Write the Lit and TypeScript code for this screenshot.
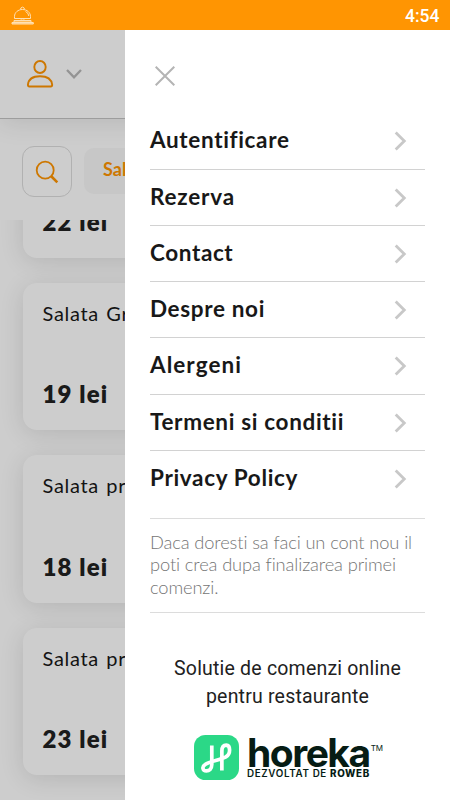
import { LitElement, html, css } from "lit";
import { customElement } from "lit/decorators.js";

interface MenuEntry { label: string; spacing: number; }

const MENU: MenuEntry[] = [
  { label: "Autentificare", spacing: 0.65 },
  { label: "Rezerva", spacing: 0.8 },
  { label: "Contact", spacing: 0.6 },
  { label: "Despre noi", spacing: 0.65 },
  { label: "Alergeni", spacing: 1.05 },
  { label: "Termeni si conditii", spacing: 0.66 },
  { label: "Privacy Policy", spacing: 0.66 },
];

const PRODUCTS = [
  { name: "Salata Caesar", price: "22 lei" },
  { name: "Salata Greceasca", price: "19 lei" },
  { name: "Salata proteica", price: "18 lei" },
  { name: "Salata primavera", price: "23 lei" },
];

@customElement("status-bar")
export class StatusBar extends LitElement {
  static styles = css`
    :host { display: flex; justify-content: space-between; align-items: center; height: 30px; box-sizing: border-box; padding: 0 10.500px 0 11px; background: #ff9502; color: #fff; }
    .bell { width: 23px; height: 19px; display: block; }
    .clock { font: 500 17.5px/30px Roboto, sans-serif; padding-top: 1px; }
  `;
  render() {
    return html`
      <svg class="bell" viewBox="0 0 23 19" fill="none" stroke="#ffe0b3" stroke-width="1">
        <path d="M3.500 12.500V10.500C3.500 6.500 7 3.500 11.500 3.500s8 3 8 7v2z" />
        <path d="M9.800 3.500V2q1.700-1.800 3.400 0V3.500M14.500 5.500q3 1.200 3.300 4.500" />
        <path d="M10 12.500v1.500h3v-1.500" stroke-opacity=".6" />
        <path d="M3 14.500h17v1.500H3z" />
        <path d="M1 16.500h21.300v1.500H1z" fill="#ffe0b3" fill-opacity=".7" />
      </svg>
      <span class="clock">4:54</span>`;
  }
}

@customElement("menu-page")
export class MenuPage extends LitElement {
  static styles = css`
    :host { display: flex; flex-direction: column; height: 770px; overflow: hidden; background: #fff; font-family: Lato, sans-serif; color: #212121; }
    .header { flex: none; height: 89px; box-sizing: border-box; display: flex; align-items: center; gap: 12px; padding: 0 0 1px 26px; border-bottom: 1px solid #c4c4c4; box-shadow: 0 4px 24px rgba(0,0,0,.1); }
    .user { width: 28px; height: 28px; }
    .down { width: 16px; height: 10px; }
    .filters { flex: none; height: 101px; box-sizing: border-box; display: flex; align-items: center; gap: 12px; padding: 4px 0 0 22px; }
    .search { width: 50px; height: 51px; box-sizing: border-box; border: 1.5px solid #dcdcdc; border-radius: 12px; display: grid; place-items: center; flex: none; }
    .search svg { width: 24px; height: 24px; }
    .chip { flex: none; width: 140px; height: 46px; margin-top: -2px; box-sizing: border-box; padding-left: 19px; border-radius: 10px; background: #f8f8f8; color: #ff9502; font-weight: 700; font-size: 18px; line-height: 43px; }
    .list { flex: 1; min-height: 0; overflow: hidden; display: flex; flex-direction: column; justify-content: flex-end; gap: 25px; padding: 0 22px 25px 22.500px; }
    .card { flex: none; height: 147.5px; box-sizing: border-box; border-radius: 14px; padding: 18px 21px 20px 20px; background: #fff; box-shadow: 0 4px 25px rgba(0,0,0,.12); display: flex; flex-direction: column; justify-content: space-between; }
    .name { font-size: 20px; line-height: 25px; letter-spacing: .7px; word-spacing: 1.500px; color: #181818; }
    .price { font-size: 24px; line-height: 32px; font-weight: 800; letter-spacing: 1.150px; }
  `;
  render() {
    return html`
      <div class="header">
        <svg class="user" viewBox="0 0 28 28" fill="none" stroke="#ff9502" stroke-width="1.900" stroke-linejoin="round">
          <ellipse cx="14" cy="7" rx="5.700" ry="6" />
          <path d="M1.900 24.800C2.500 19 7 16.200 14 16.200s11.500 2.800 12.200 8.600q0 1.700-1.500 1.700H3.400q-1.500 0-1.500-1.700z" />
        </svg>
        <svg class="down" viewBox="0 0 16 10" fill="none" stroke="#b8b8b8" stroke-width="2.300"><path d="M1 1l7 7.300L15 1" /></svg>
      </div>
      <div class="filters">
        <div class="search">
          <svg viewBox="0 0 24 24" fill="none" stroke="#ff9502"><circle cx="10.200" cy="10.200" r="8.500" stroke-width="1.800" /><path d="M16 16l6.300 6.300" stroke-width="2.600" /></svg>
        </div>
        <div class="chip">Salate</div>
      </div>
      <div class="list">
        ${PRODUCTS.map((p) => html`<div class="card"><div class="name">${p.name}</div><div class="price">${p.price}</div></div>`)}
      </div>`;
  }
}

@customElement("side-drawer")
export class SideDrawer extends LitElement {
  static styles = css`
    :host { display: flex; flex-direction: column; box-sizing: border-box; padding: 36px 25px 0; background: #fff; font-family: Lato, sans-serif; }
    .close { width: 20px; height: 20px; margin-left: 5px; flex: none; }
    .items { margin-top: 27.300px; }
    .item { display: flex; justify-content: space-between; height: 56.300px; box-sizing: border-box; border-bottom: 1px solid #d2d2d2; padding-right: 18px; }
    .item:last-child { height: 68.400px; border-bottom: 1.500px solid #dcdcdc; }
    .label { font-size: 22.500px; line-height: 30px; padding-top: 12px; font-weight: 700; color: #181818; white-space: nowrap; }
    .go { width: 13px; height: 20px; margin-top: 18px; }
    .note { flex: none; height: 94px; box-sizing: border-box; border-bottom: 1.500px solid #dcdcdc; padding-top: 11.500px; font-size: 18.300px; line-height: 22.500px; font-weight: 300; color: #757575; white-space: nowrap; }
    .note div { letter-spacing: -.12px; }
    .promo { margin-top: 42px; text-align: center; font: 400 19.500px/27.500px Roboto, sans-serif; letter-spacing: .2px; color: #212121; }
    .brand { display: flex; margin: 25px 0 0 44px; gap: 8px; }
    .mark { width: 45px; height: 45px; flex: none; }
    .words { font-family: Inter, sans-serif; color: #061c14; white-space: nowrap; }
    .name { display: flex; font-size: 39px; line-height: 36px; height: 35px; font-weight: 700; letter-spacing: -1.500px; }
    .tm { font-size: 8px; line-height: 12px; padding-top: 7px; margin-left: 1px; font-weight: 400; letter-spacing: 0; }
    .sub { font-size: 9.800px; line-height: 8px; font-weight: 600; letter-spacing: .65px; }
    .sub b { font-weight: 800; }
  `;
  render() {
    return html`
      <svg class="close" viewBox="0 0 20 20" stroke="#b4b4b4" stroke-width="2"><path d="M.700.700l18.600 18.600M19.300.700L.700 19.300" /></svg>
      <div class="items">
        ${MENU.map((m) => html`<div class="item">
          <span class="label" style="letter-spacing:${m.spacing}px">${m.label}</span>
          <svg class="go" viewBox="0 0 13 20" fill="none" stroke="#c8c8c8" stroke-width="2.800"><path d="M1.700 1.500L10.300 10l-8.600 8.500" /></svg>
        </div>`)}
      </div>
      <div class="note"><div>Daca doresti sa faci un cont nou il</div><div>poti crea dupa finalizarea primei</div><div>comenzi.</div></div>
      <div class="promo">Solutie de comenzi online<br />pentru restaurante</div>
      <div class="brand">
        <svg class="mark" viewBox="0 0 134 134" fill="none">
          <rect width="134" height="134" rx="34" fill="#2bd887" />
          <path d="M53 31V88C53 101 45 107 37 107C25 107 23 94 33 88C47 79 79 74 95 65C110 56 109 31 96 30C86 30 83 39 83 48V106" stroke="#fff" stroke-width="11" />
        </svg>
        <div class="words">
          <div class="name"><span>horeka</span><span class="tm">TM</span></div>
          <div class="sub">DEZVOLTAT DE <b>ROWEB</b></div>
        </div>
      </div>`;
  }
}

@customElement("app-root")
export class AppRoot extends LitElement {
  static styles = css`
    :host { display: block; width: 450px; height: 800px; overflow: hidden; }
    .stage { position: relative; height: 770px; }
    .scrim { position: absolute; inset: 0; background: rgba(0,0,0,.195); }
    .drawer { position: absolute; top: 0; right: 0; bottom: 0; width: 325px; }
  `;
  render() {
    return html`
      <status-bar></status-bar>
      <div class="stage">
        <menu-page></menu-page>
        <div class="scrim"></div>
        <side-drawer class="drawer"></side-drawer>
      </div>`;
  }
}
